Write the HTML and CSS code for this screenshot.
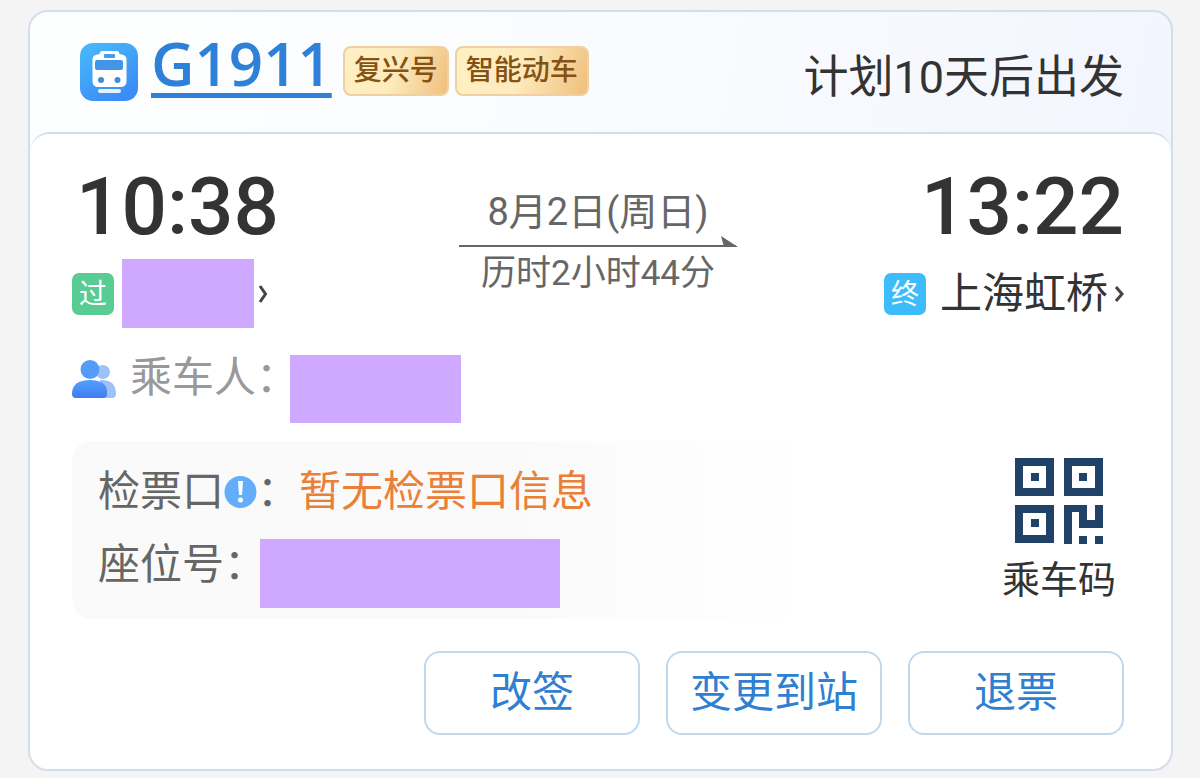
FILE: index.html
```html
<!DOCTYPE html>
<html lang="zh-CN">
<head>
<meta charset="utf-8">
<meta name="viewport" content="width=device-width, initial-scale=1">
<title>G1911</title>
<link rel="stylesheet" href="styles.css">
</head>
<body>
<main class="ticket">
  <header class="ticket-head">
    <svg class="train-icon" viewBox="0 0 58 58" aria-hidden="true">
      <defs>
        <linearGradient id="train-bg" x1="0" y1="0" x2="0.6" y2="1">
          <stop offset="0" stop-color="#47bcfb"/>
          <stop offset="1" stop-color="#3c8cf5"/>
        </linearGradient>
      </defs>
      <rect width="58" height="58" rx="13" fill="url(#train-bg)"/>
      <path fill="#fff" d="M22 8h15q2 0 2.500 3l4 1q3 1 3 5v21q0 6-6 6h-22q-6 0-6-6V17q0-4 3-5l4-1q.5-3 2.500-3z"/>
      <rect x="24" y="11" width="11" height="4" rx="1" fill="#4b9be6"/>
      <rect x="15" y="17" width="28" height="10" rx="2" fill="#4296ea"/>
      <circle cx="21" cy="37" r="3" fill="#4089dc"/>
      <circle cx="37.500" cy="37" r="3" fill="#4089dc"/>
      <rect x="18" y="46" width="23" height="4" rx="2" fill="#e4f4ff"/>
    </svg>
    <a class="train-no" href="#">G1911</a>
    <div class="tags">
      <span class="tag">复兴号</span>
      <span class="tag">智能动车</span>
    </div>
    <p class="countdown">计划10天后出发</p>
  </header>

  <div class="ticket-body">
    <section class="trip">
      <div class="stop">
        <time class="clock">10:38</time>
        <div class="station">
          <span class="mark mark-pass">过</span>
          <span class="mask mask-station"></span>
          <svg class="chevron" viewBox="0 0 10 20" aria-hidden="true"><path d="M2 2l5.500 8L2 18"/></svg>
        </div>
      </div>
      <div class="route">
        <p class="date">8月2日(周日)</p>
        <svg class="arrow" viewBox="0 0 280 12" aria-hidden="true"><path d="M1 9h277v2H1zM263 0l17 11h-14z"/></svg>
        <p class="duration">历时2小时44分</p>
      </div>
      <div class="stop stop-end">
        <time class="clock">13:22</time>
        <div class="station">
          <span class="mark mark-final">终</span>
          <span class="station-name">上海虹桥</span>
          <svg class="chevron" viewBox="0 0 10 20" aria-hidden="true"><path d="M2 3l6 7-6 7"/></svg>
        </div>
      </div>
    </section>

    <section class="passenger">
      <svg class="people-icon" viewBox="0 0 46 40" aria-hidden="true">
        <defs>
          <linearGradient id="person" x1="0" y1="0" x2="0" y2="1">
            <stop offset="0" stop-color="#56a0fa"/>
            <stop offset="1" stop-color="#3d7cf3"/>
          </linearGradient>
        </defs>
        <g fill="#9ec1f8">
          <circle cx="31" cy="12" r="7"/>
          <path d="M28 20q16-1 16 14 0 4-4 4H28z"/>
        </g>
        <circle cx="18" cy="9.500" r="9.500" fill="#539df9"/>
        <path fill="url(#person)" d="M0 34Q0 20 18 20t17 14q0 4-4 4H4q-4 0-4-4z"/>
      </svg>
      <span class="passenger-label">乘车人：</span>
      <span class="mask mask-passenger"></span>
    </section>

    <section class="details">
      <div class="seat-box">
        <div class="line gate">
          <span>检票口</span>
          <svg class="info-icon" viewBox="0 0 33 36" aria-hidden="true">
            <circle cx="16.500" cy="18" r="16" fill="#64adfb"/>
            <path fill="#fff" d="M14 7h5l-1 14h-3z"/>
            <circle cx="16.500" cy="26" r="2.500" fill="#fff"/>
          </svg>
          <span>：</span>
          <strong class="notice">暂无检票口信息</strong>
        </div>
        <div class="line seat">
          <span>座位号：</span>
          <span class="mask mask-seat"></span>
        </div>
      </div>
      <a class="ride-code" href="#">
        <svg class="qr-icon" viewBox="0 0 88 86" aria-hidden="true">
          <g fill="none" stroke="#214268" stroke-width="8">
            <path d="M4 4h31v30H4zM53 4h31v30H53zM4 51h31v30H4z"/>
          </g>
          <path fill="#214268" d="M16 15h8v8h-8zM64 15h8v8h-8zM16 61h8v8h-8zM49 47h23v15h8V47h8v23H64V54h-7v32h-8zM64 78h8v8h-8zM80 78h8v8h-8z"/>
        </svg>
        <span>乘车码</span>
      </a>
    </section>

    <footer class="actions">
      <button class="action" type="button">改签</button>
      <button class="action" type="button">变更到站</button>
      <button class="action" type="button">退票</button>
    </footer>
  </div>
</main>
</body>
</html>
```

FILE: styles.css
```css
* {
  box-sizing: border-box;
}

body {
  margin: 0;
  padding: 10px 27px 7px 28px;
  background: #f4f4f4;
  color: #333;
  font-family: Roboto, "Noto Sans CJK SC", sans-serif;
  font-size: 42px;
  line-height: 48px;
}

p {
  margin: 0;
}

a {
  color: inherit;
  text-decoration: none;
}

svg {
  display: block;
  flex: none;
}

.ticket {
  border: 2px solid #d3deec;
  border-radius: 20px;
  background: linear-gradient(100deg, #fdffff, #f9fafe 60%, #f0f4fe);
  overflow: hidden;
}

.ticket-head {
  display: flex;
  align-items: center;
  height: 120px;
  padding: 0 47px 0 50px;
}

.train-icon {
  width: 58px;
  height: 58px;
  margin-right: 13px;
}

.train-no {
  padding-bottom: 18px;
  color: #2f80d8;
  font-family: "Open Sans", sans-serif;
  font-size: 60px;
  font-weight: 600;
  line-height: 64px;
  text-decoration: underline;
  text-decoration-thickness: 5px;
  text-decoration-skip-ink: none;
  text-underline-offset: 7px;
}

.tags {
  display: flex;
  gap: 6px;
  margin: 0 auto 2px 11px;
}

.tag {
  padding: 0 9px;
  border: 2px solid #f0cfa0;
  border-radius: 8px;
  background: linear-gradient(110deg, #fff1c4, #fdeabd 50%, #f0bf7c);
  color: #855214;
  font-size: 28px;
  font-weight: 500;
  line-height: 46px;
}

.countdown {
  padding-top: 12px;
  font-size: 45px;
  white-space: nowrap;
}

.ticket-body {
  padding: 35px 47px 34px 42px;
  border-top: 2px solid #d3deec;
  border-radius: 20px;
  background: #fff;
}

.trip {
  display: grid;
  grid-template-columns: 1fr 280px 1fr;
}

.stop {
  display: flex;
  flex-direction: column;
  align-items: flex-start;
  gap: 14px;
}

.stop-end {
  align-items: flex-end;
}

.clock {
  padding-left: 4px;
  font-size: 80px;
  font-weight: 500;
  line-height: 76px;
}

.station {
  display: flex;
  align-items: center;
  height: 69px;
}

.station-name {
  margin-left: 14px;
  margin-right: 6px;
}

.mark {
  width: 42px;
  height: 42px;
  border-radius: 7px;
  color: #fff;
  font-size: 28px;
  line-height: 44px;
  text-align: center;
}

.mark-pass {
  background: #58cc92;
}

.mark-final {
  background: #3dbcfb;
}

.mask {
  flex: none;
  background: #cea9ff;
}

.mask-station {
  width: 132px;
  height: 69px;
  margin: 0 4px 0 8px;
}

.chevron {
  width: 10px;
  height: 20px;
  fill: none;
  stroke: #444;
  stroke-width: 3;
}

.route {
  padding-top: 19px;
  color: #666;
  text-align: center;
}

.date {
  font-size: 38px;
}

.duration {
  font-size: 35px;
}

.arrow {
  width: 100%;
  height: 12px;
  margin-bottom: 2px;
  fill: #666;
}

.passenger {
  display: flex;
  margin-top: 27px;
}

.people-icon {
  width: 46px;
  height: 40px;
  margin: 5px 12px 0 0;
}

.passenger-label {
  width: 160px;
  color: #999;
  line-height: 46px;
  white-space: nowrap;
}

.mask-passenger {
  width: 171px;
  height: 68px;
}

.details {
  display: flex;
  justify-content: space-between;
  margin-top: 18px;
}

.seat-box {
  flex: 0 1 730px;
  padding: 27px 26px 11px;
  border-radius: 20px;
  background: linear-gradient(90deg, #fafafa 60%, #fff);
  color: #666;
}

.line {
  display: flex;
}

.gate {
  align-items: center;
}

.info-icon {
  width: 33px;
  height: 36px;
}

.notice {
  color: #ea8038;
  font-weight: 400;
}

.seat {
  margin-top: 23px;
  line-height: 52px;
}

.mask-seat {
  width: 300px;
  height: 69px;
  margin-left: -6px;
}

.ride-code {
  display: flex;
  flex-direction: column;
  align-items: center;
  gap: 12px;
  padding: 17px 8px 0 0;
  font-size: 38px;
}

.qr-icon {
  width: 88px;
  height: 86px;
}

.actions {
  display: flex;
  justify-content: flex-end;
  gap: 26px;
  margin-top: 32px;
}

.action {
  width: 216px;
  height: 84px;
  padding: 0;
  border: 2px solid #bfd9ef;
  border-radius: 16px;
  background: #fff;
  color: #2f80d0;
  font: inherit;
}
```
